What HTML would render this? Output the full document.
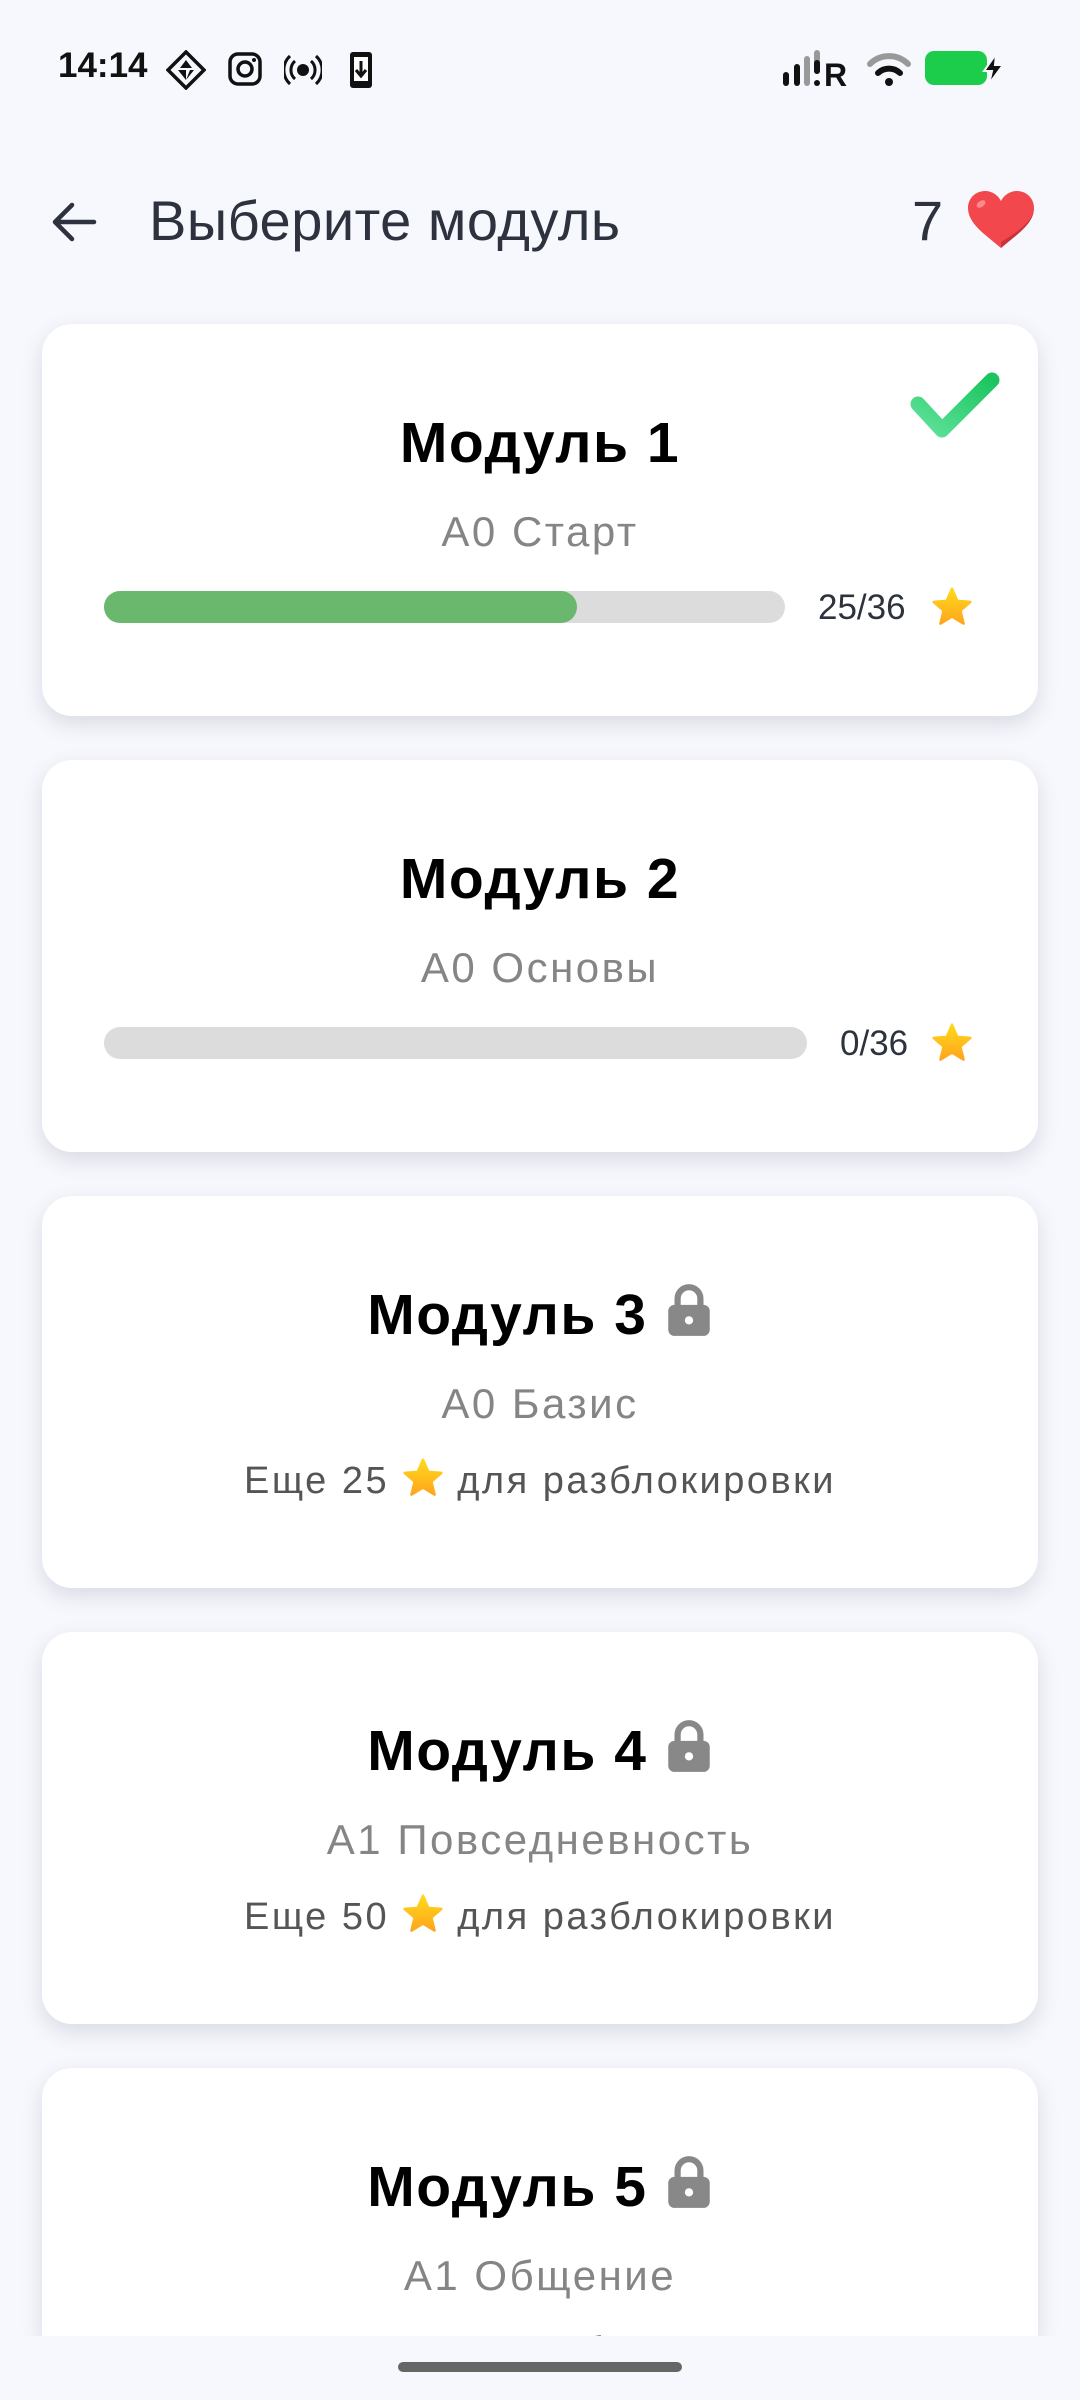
<!DOCTYPE html>
<html><head><meta charset="utf-8">
<style>
*{margin:0;padding:0;box-sizing:border-box}
html,body{width:1080px;height:2400px;overflow:hidden;background:#f7f8fd;font-family:"Liberation Sans",sans-serif;position:relative}
.abs{position:absolute}
.card{position:absolute;left:42px;width:996px;height:392px;background:#fff;border-radius:30px;box-shadow:0 8px 22px rgba(60,70,100,0.16)}
.title{position:absolute;left:0;right:0;text-align:center;font-weight:bold;font-size:57px;color:#000;letter-spacing:1.5px}
.sub{position:absolute;left:0;right:0;text-align:center;font-size:42px;color:#858585;letter-spacing:2.5px}
.unl{position:absolute;left:0;right:0;text-align:center;font-size:38px;color:#555;letter-spacing:2.5px}
.bar{position:absolute;height:32px;border-radius:16px;background:#dcdcdc}
.cnt{position:absolute;font-size:35px;color:#2d333d}
.st{display:inline-block;width:42px;height:40px;vertical-align:-5px}
</style></head><body>
<svg width="0" height="0" style="position:absolute"><defs><linearGradient id="sg" x1="0" y1="0" x2="0" y2="1"><stop offset="0" stop-color="#ffd91c"/><stop offset="1" stop-color="#ffa51c"/></linearGradient><linearGradient id="g" x1="0" y1="1" x2="1" y2="0"><stop offset="0" stop-color="#5fe29a"/><stop offset="1" stop-color="#1cc45f"/></linearGradient></defs></svg>

<!-- status bar -->
<div class="abs" style="left:58px;top:46px;font-size:35px;font-weight:bold;color:#111">14:14</div>
<svg class="abs" style="left:166px;top:50px" width="40" height="40" viewBox="0 0 40 40"><path d="M20 2 L38 20 L20 38 L2 20 Z" fill="none" stroke="#111" stroke-width="3.5"/><path d="M20 10 L14 18 H26 Z M12 20 L20 30 L20 20 Z M28 20 L20 30 L24 20Z" fill="#111"/></svg>
<svg class="abs" style="left:228px;top:52px" width="34" height="34" viewBox="0 0 34 34"><rect x="2" y="2" width="30" height="30" rx="8" fill="none" stroke="#111" stroke-width="3.5"/><circle cx="17" cy="17" r="7" fill="none" stroke="#111" stroke-width="3.5"/><circle cx="26" cy="8" r="2" fill="#111"/></svg>
<svg class="abs" style="left:284px;top:52px" width="38" height="36" viewBox="0 0 38 36"><circle cx="19" cy="18" r="6" fill="#111"/><path d="M11 9 A12 12 0 0 0 11 27 M27 9 A12 12 0 0 1 27 27 M6 4 A19 19 0 0 0 6 32 M32 4 A19 19 0 0 1 32 32" fill="none" stroke="#111" stroke-width="3"/></svg>
<svg class="abs" style="left:349px;top:51px" width="24" height="38" viewBox="0 0 24 38"><rect x="1" y="1" width="22" height="36" rx="3" fill="#111"/><rect x="5" y="6" width="14" height="24" fill="#fff"/><path d="M12 10 V24 M7 19 L12 25 L17 19" stroke="#111" stroke-width="3" fill="none"/></svg>

<svg class="abs" style="left:780px;top:50px" width="75" height="38" viewBox="0 0 75 38"><rect x="3" y="22" width="6" height="14" rx="3" fill="#111"/><rect x="14" y="14" width="6" height="22" rx="3" fill="#111"/><rect x="24" y="6" width="6" height="30" rx="3" fill="#999"/><rect x="34" y="0" width="6" height="24" rx="3" fill="#999"/><rect x="34" y="10" width="6" height="14" rx="3" fill="#111"/><circle cx="37" cy="33" r="3" fill="#111"/><text x="44" y="36" font-family="Liberation Sans" font-weight="bold" font-size="32" fill="#111">R</text></svg>
<svg class="abs" style="left:866px;top:50px" width="46" height="36" viewBox="0 0 46 36"><path d="M4 14 A27 27 0 0 1 42 14" fill="none" stroke="#999" stroke-width="6" stroke-linecap="round"/><path d="M12 23 A16 16 0 0 1 34 23" fill="none" stroke="#111" stroke-width="6" stroke-linecap="round"/><circle cx="23" cy="32" r="4" fill="#111"/></svg>
<div class="abs" style="left:925px;top:51px;width:62px;height:34px;border-radius:9px;background:#1ccd4c"></div>
<svg class="abs" style="left:982px;top:54px" width="24" height="30" viewBox="0 0 24 30"><path d="M14 0 L2 17 H10 L7 30 L21 11 H13 Z" fill="#111" stroke="#f7f8fd" stroke-width="2"/></svg>

<!-- header -->
<svg class="abs" style="left:50px;top:200px" width="48" height="44" viewBox="0 0 48 44"><path d="M44 22 H6 M22 5 L5 22 L22 39" fill="none" stroke="#2d323e" stroke-width="4.5" stroke-linecap="round" stroke-linejoin="round"/></svg>
<div class="abs" style="left:149px;top:188px;font-size:56px;color:#2d323e;letter-spacing:0.5px">Выберите модуль</div>
<div class="abs" style="left:912px;top:188px;font-size:56px;color:#2d323e">7</div>
<svg class="abs" style="left:966px;top:190px" width="70" height="60" viewBox="0 0 70 60"><path d="M35 58 C20 45 2 34 2 18 C2 8 10 1 19 1 C26 1 32 5 35 11 C38 5 44 1 51 1 C60 1 68 8 68 18 C68 34 50 45 35 58Z" fill="#f2474c"/><path d="M35 58 C50 45 68 34 68 18 C68 30 52 42 35 52Z" fill="#c93439"/><ellipse cx="15" cy="14" rx="5" ry="3" fill="#ff8a8e" transform="rotate(-35 15 14)"/></svg>

<!-- card 1 -->
<div class="card" style="top:324px">
  <div class="title" style="top:86px">Модуль 1</div>
  <svg class="abs" style="left:868px;top:48px" width="90" height="68" viewBox="0 0 90 68"><path d="M8 32 L32 58 L82 8" fill="none" stroke="url(#g)" stroke-width="15" stroke-linecap="round" stroke-linejoin="round"/></svg>
  <div class="sub" style="top:184px">А0 Старт</div>
  <div class="bar" style="left:62px;top:267px;width:681px"></div>
  <div class="bar" style="left:62px;top:267px;width:473px;background:#69b86d"></div>
  <div class="cnt" style="left:776px;top:264px">25/36</div>
  <svg class="abs" style="left:889px;top:263px" width="42" height="40" viewBox="0 0 24 23"><path d="M12 1 L15 8 L22.5 8.6 L16.8 13.5 L18.6 21 L12 17 L5.4 21 L7.2 13.5 L1.5 8.6 L9 8 Z" fill="url(#sg)" stroke="url(#sg)" stroke-width="1.5" stroke-linejoin="round"/></svg>
</div>

<!-- card 2 -->
<div class="card" style="top:760px">
  <div class="title" style="top:86px">Модуль 2</div>
  <div class="sub" style="top:184px">А0 Основы</div>
  <div class="bar" style="left:62px;top:267px;width:703px"></div>
  <div class="cnt" style="left:798px;top:264px">0/36</div>
  <svg class="abs" style="left:889px;top:263px" width="42" height="40" viewBox="0 0 24 23"><path d="M12 1 L15 8 L22.5 8.6 L16.8 13.5 L18.6 21 L12 17 L5.4 21 L7.2 13.5 L1.5 8.6 L9 8 Z" fill="url(#sg)" stroke="url(#sg)" stroke-width="1.5" stroke-linejoin="round"/></svg>
</div>

<!-- card 3 -->
<div class="card" style="top:1196px">
  <div class="title" style="top:86px">Модуль 3 <svg width="48" height="56" viewBox="0 0 46 54" style="vertical-align:-4px"><path d="M12 24 V16 A11 11 0 0 1 34 16 V24" fill="none" stroke="#888" stroke-width="6"/><rect x="3" y="22" width="40" height="30" rx="6" fill="#888"/><circle cx="23" cy="37" r="4" fill="#fff"/></svg></div>
  <div class="sub" style="top:184px">А0 Базис</div>
  <div class="unl" style="top:262px">Еще 25 <svg class="st" viewBox="0 0 24 23"><path d="M12 1 L15 8 L22.5 8.6 L16.8 13.5 L18.6 21 L12 17 L5.4 21 L7.2 13.5 L1.5 8.6 L9 8 Z" fill="url(#sg)" stroke="url(#sg)" stroke-width="1.5" stroke-linejoin="round"/></svg> для разблокировки</div>
</div>

<!-- card 4 -->
<div class="card" style="top:1632px">
  <div class="title" style="top:86px">Модуль 4 <svg width="48" height="56" viewBox="0 0 46 54" style="vertical-align:-4px"><path d="M12 24 V16 A11 11 0 0 1 34 16 V24" fill="none" stroke="#888" stroke-width="6"/><rect x="3" y="22" width="40" height="30" rx="6" fill="#888"/><circle cx="23" cy="37" r="4" fill="#fff"/></svg></div>
  <div class="sub" style="top:184px">А1 Повседневность</div>
  <div class="unl" style="top:262px">Еще 50 <svg class="st" viewBox="0 0 24 23"><path d="M12 1 L15 8 L22.5 8.6 L16.8 13.5 L18.6 21 L12 17 L5.4 21 L7.2 13.5 L1.5 8.6 L9 8 Z" fill="url(#sg)" stroke="url(#sg)" stroke-width="1.5" stroke-linejoin="round"/></svg> для разблокировки</div>
</div>

<!-- card 5 -->
<div class="card" style="top:2068px;height:268px;border-radius:30px 30px 0 0;overflow:hidden">
  <div class="title" style="top:86px">Модуль 5 <svg width="48" height="56" viewBox="0 0 46 54" style="vertical-align:-4px"><path d="M12 24 V16 A11 11 0 0 1 34 16 V24" fill="none" stroke="#888" stroke-width="6"/><rect x="3" y="22" width="40" height="30" rx="6" fill="#888"/><circle cx="23" cy="37" r="4" fill="#fff"/></svg></div>
  <div class="sub" style="top:184px">А1 Общение</div>
  <div class="unl" style="top:262px">Еще 75 для разблокировки</div>
</div>

<!-- nav bar -->
<div class="abs" style="left:0;top:2336px;width:1080px;height:64px;background:#f7f8fd"></div>
<div class="abs" style="left:398px;top:2362px;width:284px;height:10px;border-radius:5px;background:#666"></div>
</body></html>
